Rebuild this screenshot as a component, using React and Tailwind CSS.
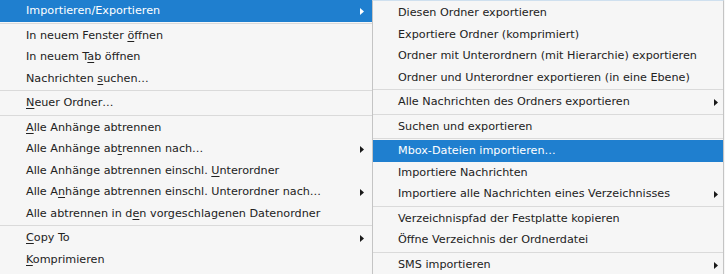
import React from "react";

// label, mnemonic index (-1 = none), submenu arrow, highlighted
const LEFT = [
  { t: "Importieren/Exportieren", u: -1, sub: true, hl: true },
  "sep",
  { t: "In neuem Fenster öffnen", u: 17 },
  { t: "In neuem Tab öffnen", u: 10 },
  { t: "Nachrichten suchen…", u: 12 },
  "sep",
  { t: "Neuer Ordner…", u: 0 },
  "sep",
  { t: "Alle Anhänge abtrennen", u: 0 },
  { t: "Alle Anhänge abtrennen nach…", u: 15, sub: true },
  { t: "Alle Anhänge abtrennen einschl. Unterordner", u: 32 },
  { t: "Alle Anhänge abtrennen einschl. Unterordner nach…", u: 6, sub: true },
  { t: "Alle abtrennen in den vorgeschlagenen Datenordner", u: 19 },
  "sep",
  { t: "Copy To", u: 0, sub: true },
  { t: "Komprimieren", u: 0 },
];

const RIGHT = [
  { t: "Diesen Ordner exportieren", u: -1 },
  { t: "Exportiere Ordner (komprimiert)", u: -1 },
  { t: "Ordner mit Unterordnern (mit Hierarchie) exportieren", u: -1 },
  { t: "Ordner und Unterordner exportieren (in eine Ebene)", u: -1 },
  "sep",
  { t: "Alle Nachrichten des Ordners exportieren", u: -1, sub: true },
  "sep",
  { t: "Suchen und exportieren", u: -1 },
  "sep",
  { t: "Mbox-Dateien importieren…", u: -1, hl: true },
  { t: "Importiere Nachrichten", u: -1 },
  { t: "Importiere alle Nachrichten eines Verzeichnisses", u: -1, sub: true },
  "sep",
  { t: "Verzeichnispfad der Festplatte kopieren", u: -1 },
  { t: "Öffne Verzeichnis der Ordnerdatei", u: -1 },
  "sep",
  { t: "SMS importieren", u: -1, sub: true },
];

function Arrow({ light }) {
  return (
    <svg width="4" height="7" viewBox="0 0 4 7" className="shrink-0">
      <polygon points="0,0 4,3.5 0,7" fill={light ? "#ffffff" : "#1a1a1a"} />
    </svg>
  );
}

function Label({ t, u }) {
  if (u < 0) return <span>{t}</span>;
  return (
    <span>
      {t.slice(0, u)}
      <span className="underline underline-offset-2">{t[u]}</span>
      {t.slice(u + 1)}
    </span>
  );
}

function Menu({ items, arrowPad }) {
  return items.map((it, i) =>
    it === "sep" ? (
      <div key={i} className="h-[3px] flex flex-col justify-center">
        <div className="h-px bg-[#dadada]" />
      </div>
    ) : (
      <div
        key={i}
        className={`h-[21.5px] flex items-center pl-[26px] pt-[2px] whitespace-nowrap ${arrowPad} ${
          it.hl ? "bg-[#1f7fcf] text-white" : "text-[#222222]"
        }`}
      >
        <div className="flex-1">
          <Label t={it.t} u={it.u} />
        </div>
        {it.sub && <Arrow light={it.hl} />}
      </div>
    )
  );
}

export default function App() {
  return (
    <div
      className="w-[725px] h-[274px] flex bg-[#f6f6f6] text-[11.2px] overflow-hidden"
      style={{ fontFamily: '"DejaVu Sans", sans-serif' }}
    >
      <div className="w-[372px] shrink-0 flex flex-col">
        <Menu items={LEFT} arrowPad="pr-[8px]" />
      </div>
      <div className="w-[352px] shrink-0 flex flex-col border-x border-[#c4c4c4] border-t border-t-[#cfe0ef] pt-px h-[274px]">
        <div className="flex flex-col">
          <Menu items={RIGHT} arrowPad="pr-[5px] !pl-[25px]" />
        </div>
      </div>
      <div className="flex-1 bg-[#f6f6f6]" />
    </div>
  );
}
